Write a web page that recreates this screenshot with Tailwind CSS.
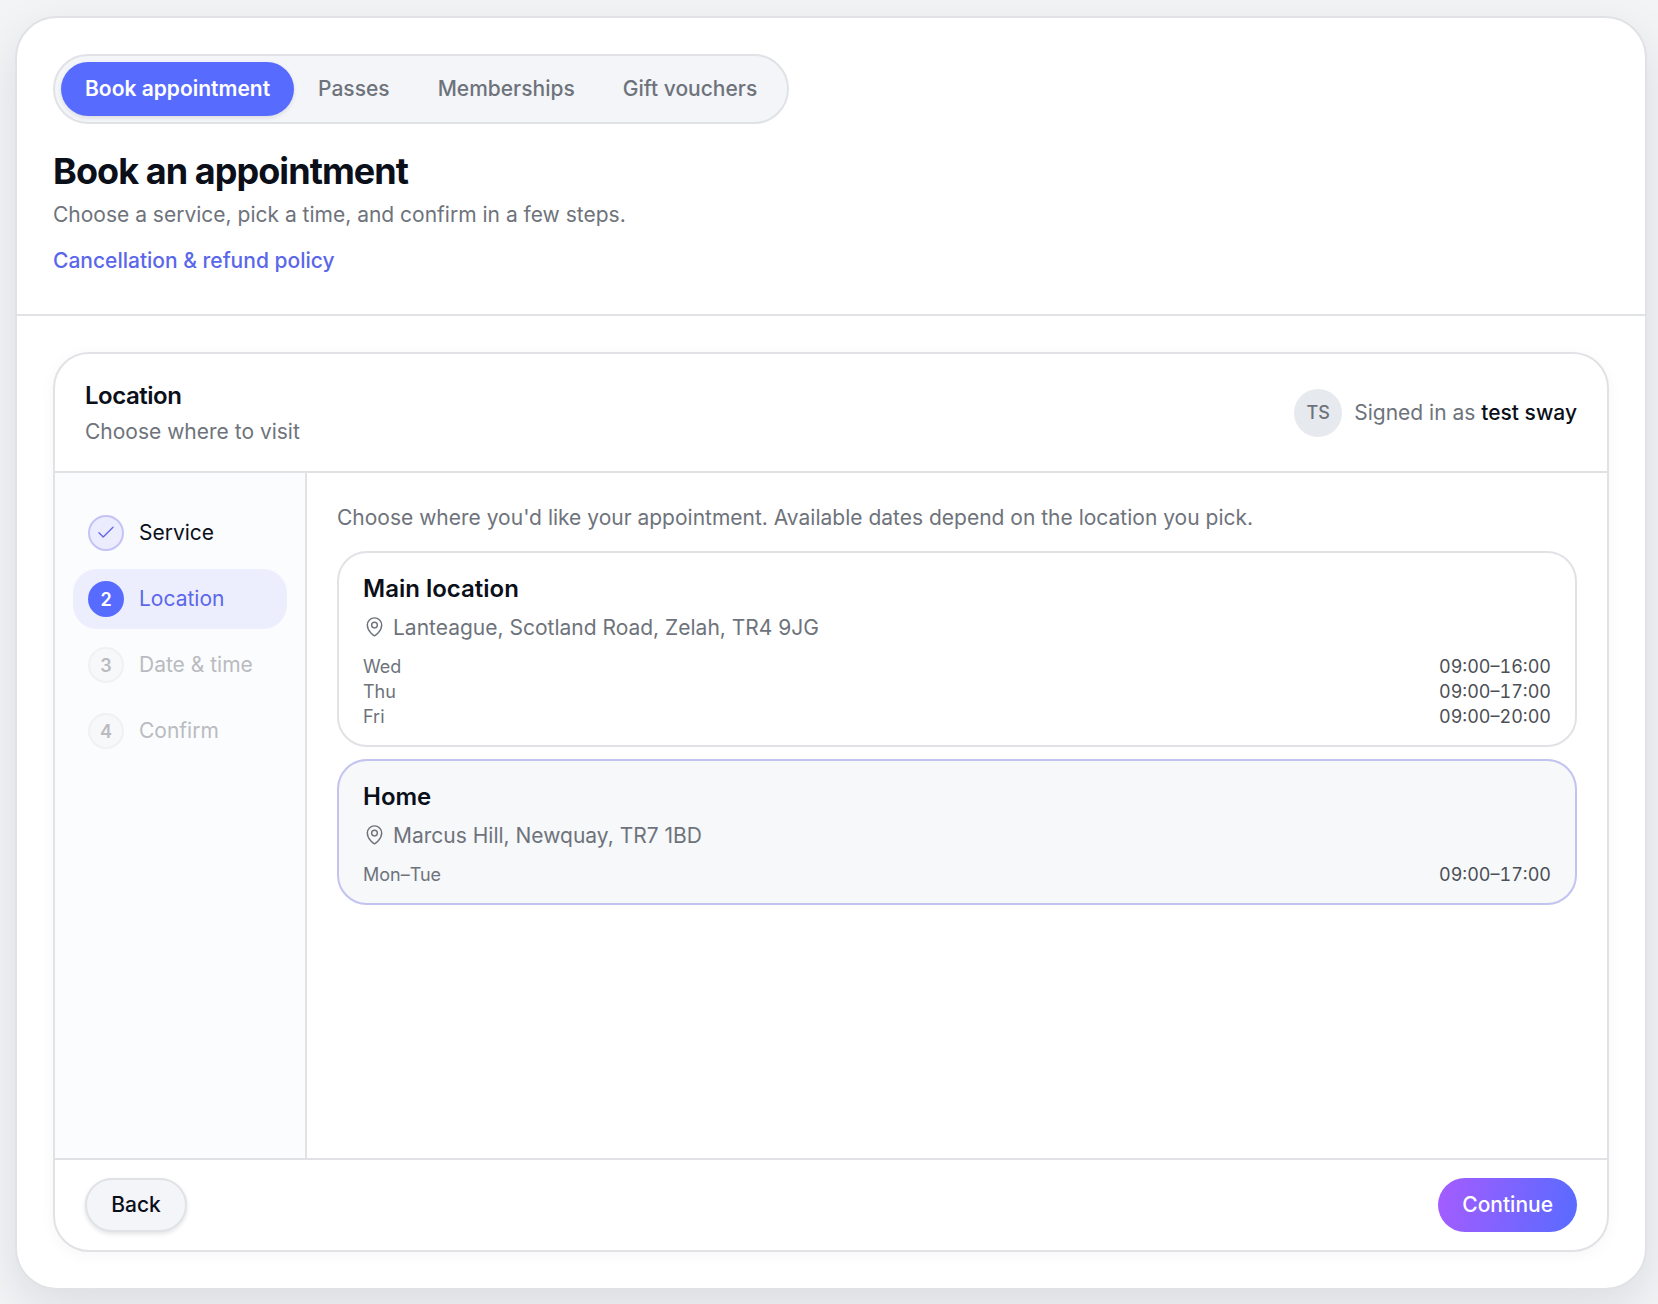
<!DOCTYPE html>
<html lang="en">
<head>
    <meta charset="UTF-8">
    <title>Book an appointment</title>
    <script src="https://cdn.jsdelivr.net/npm/@tailwindcss/browser@4"></script>
</head>
<body class="h-[1304px] overflow-hidden bg-[#f3f4f6] pt-4 pl-[15px] font-['Inter',sans-serif] text-[21px] leading-[30px] text-[#0b0f19]">

<div class="flex h-[1274px] w-[1632px] flex-col rounded-[42px] border-2 border-[#e0e2e6] bg-white shadow-[0_18px_50px_rgba(15,23,42,0.10)]">

    <!-- Page header -->
    <header class="h-[298px] shrink-0 border-b-2 border-[#e0e2e6] px-9 pt-9">
        <nav class="flex h-[70px] w-fit rounded-full border-2 border-[#e0e2e6] bg-[#f3f5f9] p-1.5 font-medium text-[#6e737b]">
            <button class="h-[54px] rounded-full bg-[#586bff] px-6 font-semibold text-white shadow-[0_2px_4px_rgba(15,23,42,0.10)]">Book appointment</button>
            <button class="px-6">Passes</button>
            <button class="px-6">Memberships</button>
            <button class="px-6">Gift vouchers</button>
        </nav>
        <h1 class="mt-[25px] text-[36px] leading-[45px] font-bold tracking-[-0.026em]">Book an appointment</h1>
        <p class="mt-1.5 text-[#6e737b]">Choose a service, pick a time, and confirm in a few steps.</p>
        <a href="#" class="mt-4 block w-fit font-medium text-[#5b67ea]">Cancellation &amp; refund policy</a>
    </header>

    <!-- Booking panel -->
    <div class="mx-9 mt-9 flex h-[900px] shrink-0 flex-col rounded-[36px] border-2 border-[#e0e2e6] bg-white shadow-[0_3px_16px_rgba(15,23,42,0.04)]">
        <div class="flex h-[119px] shrink-0 items-center justify-between border-b-2 border-[#e0e2e6] px-[30px]">
            <div>
                <h2 class="text-[24px] leading-[36px] font-semibold tracking-[-0.02em]">Location</h2>
                <p class="mt-0.5 leading-[32px] text-[#6e737b]">Choose where to visit</p>
            </div>
            <div class="flex items-center gap-3">
                <span class="flex size-12 items-center justify-center rounded-full bg-[#e6e9ee] pt-px text-[18px] font-medium text-[#6e737b]">TS</span>
                <p class="text-[#6e737b]">Signed in as <span class="font-medium text-[#0b0f19]">test sway</span></p>
            </div>
        </div>

        <div class="flex min-h-0 flex-1">
            <!-- Steps -->
            <aside class="flex w-[252px] shrink-0 flex-col gap-1.5 border-r-2 border-[#e0e2e6] bg-[#fbfcfe] px-[18px] pt-[30px]">
                <div class="flex h-[60px] items-center gap-[15px] px-[15px]">
                    <span class="flex size-9 items-center justify-center rounded-full border-2 border-[#c5c3f6] bg-[#ebedff]">
                        <svg class="size-[18px]" viewBox="0 0 18 18" fill="none" stroke="#6467e8" stroke-width="1.4" stroke-linecap="round" stroke-linejoin="round"><path d="M2 8.8 6.2 13 16 3.2"/></svg>
                    </span>
                    <span>Service</span>
                </div>
                <div class="flex h-[60px] items-center gap-[15px] rounded-[24px] bg-[#edeefd] px-[15px] text-[#5b67ea]">
                    <span class="flex size-9 items-center justify-center rounded-full bg-[#586bff] pt-0.5 text-[18px] font-semibold text-white">2</span>
                    <span>Location</span>
                </div>
                <div class="flex h-[60px] items-center gap-[15px] px-[15px] text-[#b9bbc0]">
                    <span class="flex size-9 items-center justify-center rounded-full border-2 border-[#f0f1f3] bg-[#f7f8fa] pt-0.5 text-[18px] font-semibold">3</span>
                    <span>Date &amp; time</span>
                </div>
                <div class="flex h-[60px] items-center gap-[15px] px-[15px] text-[#b9bbc0]">
                    <span class="flex size-9 items-center justify-center rounded-full border-2 border-[#f0f1f3] bg-[#f7f8fa] pt-0.5 text-[18px] font-semibold">4</span>
                    <span>Confirm</span>
                </div>
            </aside>

            <!-- Locations -->
            <main class="flex-1 px-[30px] pt-[30px]">
                <p class="text-[#6e737b]">Choose where you'd like your appointment. Available dates depend on the location you pick.</p>

                <div class="mt-[18px] h-[196px] rounded-[30px] border-2 border-[#e0e2e6] px-6 pt-[19px]">
                    <h3 class="text-[24px] leading-[34px] font-semibold">Main location</h3>
                    <div class="mt-[7px] flex items-center gap-[7px] text-[#6e737b]">
                        <svg class="-mt-1 size-[23px]" viewBox="0 0 24 24" fill="none" stroke="currentColor" stroke-width="1.5" stroke-linecap="round" stroke-linejoin="round"><path d="M15 10.5a3 3 0 1 1-6 0 3 3 0 0 1 6 0Z"/><path d="M19.5 10.5c0 7.142-7.5 11.25-7.5 11.25S4.5 17.642 4.5 10.5a7.5 7.5 0 1 1 15 0Z"/></svg>
                        <span>Lanteague, Scotland Road, Zelah, TR4 9JG</span>
                    </div>
                    <dl class="mt-[11px] text-[18px] leading-[25px] text-[#6e737b]">
                        <div class="flex justify-between"><dt>Wed</dt><dd class="text-[#4c4f55] tabular-nums">09:00–16:00</dd></div>
                        <div class="flex justify-between"><dt>Thu</dt><dd class="text-[#4c4f55] tabular-nums">09:00–17:00</dd></div>
                        <div class="flex justify-between"><dt>Fri</dt><dd class="text-[#4c4f55] tabular-nums">09:00–20:00</dd></div>
                    </dl>
                </div>

                <div class="mt-3 h-[146px] rounded-[30px] border-2 border-[#c3c3f0] bg-[#f6f8fa] px-6 pt-[19px]">
                    <h3 class="text-[24px] leading-[34px] font-semibold">Home</h3>
                    <div class="mt-[7px] flex items-center gap-[7px] text-[#6e737b]">
                        <svg class="-mt-1 size-[23px]" viewBox="0 0 24 24" fill="none" stroke="currentColor" stroke-width="1.5" stroke-linecap="round" stroke-linejoin="round"><path d="M15 10.5a3 3 0 1 1-6 0 3 3 0 0 1 6 0Z"/><path d="M19.5 10.5c0 7.142-7.5 11.25-7.5 11.25S4.5 17.642 4.5 10.5a7.5 7.5 0 1 1 15 0Z"/></svg>
                        <span>Marcus Hill, Newquay, TR7 1BD</span>
                    </div>
                    <dl class="mt-[11px] text-[18px] leading-[25px] text-[#6e737b]">
                        <div class="flex justify-between"><dt>Mon–Tue</dt><dd class="text-[#4c4f55] tabular-nums">09:00–17:00</dd></div>
                    </dl>
                </div>
            </main>
        </div>

        <!-- Actions -->
        <footer class="flex h-[92px] shrink-0 items-center justify-between border-t-2 border-[#e0e2e6] px-[30px]">
            <button class="h-[54px] w-[102px] rounded-full border-2 border-[#e0e2e6] bg-[#f3f5f9] font-medium shadow-[0_2px_4px_rgba(15,23,42,0.12)]">Back</button>
            <button class="h-[54px] rounded-full bg-linear-[100deg] from-[#a55cff] to-[#586bff] px-6 font-medium text-white">Continue</button>
        </footer>
    </div>
</div>

</body>
</html>
